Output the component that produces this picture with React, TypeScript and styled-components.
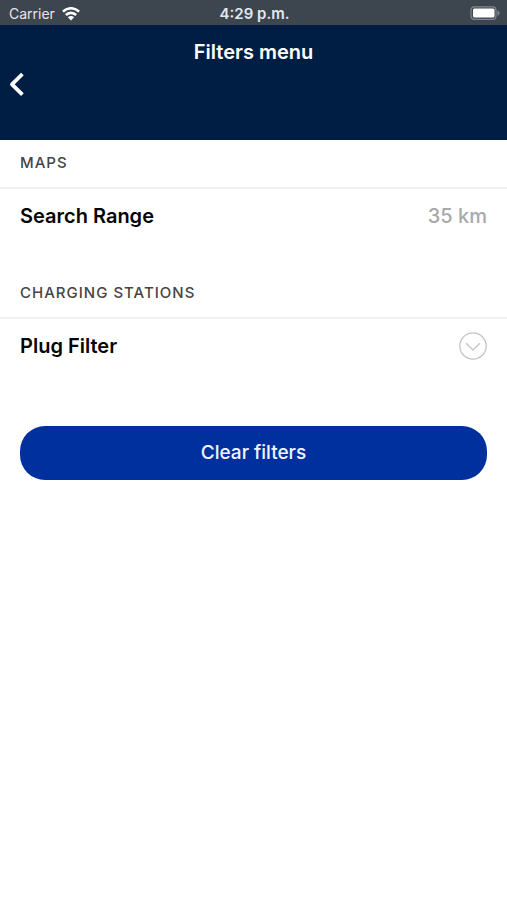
import React from "react";
import styled, { createGlobalStyle } from "styled-components";

const GlobalStyle = createGlobalStyle`
  *, *::before, *::after { box-sizing: border-box; }
  body {
    margin: 0;
    background: #ffffff;
    color: #050505;
    font-family: Inter, "Liberation Sans", sans-serif;
  }
`;

const Screen = styled.div`
  display: flex;
  flex-direction: column;
  min-height: 100vh;
`;

const StatusBar = styled.div`
  display: grid;
  grid-template-columns: 1fr auto 1fr;
  align-items: center;
  height: 25px;
  padding: 2px 7px 0 9px;
  background: #3d464f;
  color: #e4e8ec;
  font-size: 14px;
  line-height: 20px;
`;

const Carrier = styled.div`
  display: flex;
  align-items: center;
  gap: 7px;
`;

const Clock = styled.time`
  font-size: 15px;
  font-weight: 600;
`;

const Battery = styled.svg`
  justify-self: end;
`;

const Header = styled.header`
  display: flex;
  flex-direction: column;
  height: 115px;
  padding-top: 14px;
  background: #001e43;
  color: #ffffff;
`;

const Title = styled.h1`
  margin: 0;
  text-align: center;
  font-size: 20px;
  font-weight: 600;
  line-height: 26px;
`;

const BackButton = styled.button`
  display: flex;
  align-self: flex-start;
  margin: 0;
  padding: 6px 8px;
  border: 0;
  background: none;
  color: inherit;
  cursor: pointer;
`;

const Content = styled.main`
  display: flex;
  flex-direction: column;
  gap: 27px;
`;

const SectionTitle = styled.h2`
  margin: 0;
  padding: 13px 20px 14px;
  border-bottom: 2px solid #f1f1f1;
  color: #454545;
  font-size: 15px;
  font-weight: 500;
  line-height: 20px;
  letter-spacing: 1px;
  text-transform: uppercase;
`;

const Row = styled.button`
  display: flex;
  align-items: center;
  justify-content: space-between;
  width: 100%;
  height: 54px;
  margin: 0;
  padding: 0 20px;
  border: 0;
  background: none;
  color: #050505;
  font: inherit;
  font-size: 20px;
  font-weight: 600;
  line-height: 26px;
  cursor: pointer;
`;

const Value = styled.span`
  color: #a9a9ab;
  font-weight: 500;
`;

const ClearButton = styled.button`
  height: 54px;
  margin: 26px 20px 0;
  border: 0;
  border-radius: 25px;
  background: #00309e;
  color: #f2f5ff;
  font: inherit;
  font-size: 19px;
  font-weight: 500;
  line-height: 26px;
  cursor: pointer;
`;

function WifiIcon() {
  return (
    <svg width="18" height="14" viewBox="0 0 18 14" fill="none" stroke="#ffffff" strokeWidth="2.6" aria-hidden="true">
      <path d="M0.9 4.7C5.3 0.1 12.7 0.1 17.1 4.7" />
      <path d="M3.9 8C6.7 5.1 11.3 5.1 14.1 8" />
      <path d="M9 13.5L5.9 10.3C7.6 8.6 10.4 8.6 12.1 10.3Z" fill="#ffffff" stroke="none" />
    </svg>
  );
}

function BatteryIcon() {
  return (
    <Battery width="30" height="15" viewBox="0 0 30 15" role="img" aria-label="Battery full">
      <rect x="1" y="0.8" width="25" height="12.6" rx="3.5" fill="none" stroke="#80878e" strokeWidth="1.2" />
      <rect x="3" y="2.6" width="21.5" height="9" rx="1.5" fill="#ffffff" />
      <path d="M27.4 4.4C30.4 5.4 30.4 8.8 27.4 9.8Z" fill="#80878e" />
    </Battery>
  );
}

function BackIcon() {
  return (
    <svg width="18" height="26" viewBox="0 0 18 26" fill="none" stroke="#ffffff" strokeWidth="3.8" strokeLinejoin="round" aria-hidden="true">
      <path d="M14.4 3L4 13.3L14.4 23.6" />
    </svg>
  );
}

function ExpandIcon() {
  return (
    <svg width="28" height="28" viewBox="0 0 28 28" fill="none" stroke="#c4c4c4" strokeWidth="1.3" aria-hidden="true">
      <circle cx="14" cy="14" r="13.2" />
      <path d="M7.2 11.3L14 18L20.8 11.3" />
    </svg>
  );
}

export default function App() {
  return (
    <Screen>
      <GlobalStyle />
      <StatusBar>
        <Carrier>
          Carrier
          <WifiIcon />
        </Carrier>
        <Clock>4:29 p.m.</Clock>
        <BatteryIcon />
      </StatusBar>
      <Header>
        <Title>Filters menu</Title>
        <BackButton type="button" aria-label="Back">
          <BackIcon />
        </BackButton>
      </Header>
      <Content>
        <section>
          <SectionTitle>Maps</SectionTitle>
          <Row type="button">
            Search Range
            <Value>35 km</Value>
          </Row>
        </section>
        <section>
          <SectionTitle>Charging stations</SectionTitle>
          <Row type="button" aria-expanded={false}>
            Plug Filter
            <ExpandIcon />
          </Row>
        </section>
        <ClearButton type="button">Clear filters</ClearButton>
      </Content>
    </Screen>
  );
}
